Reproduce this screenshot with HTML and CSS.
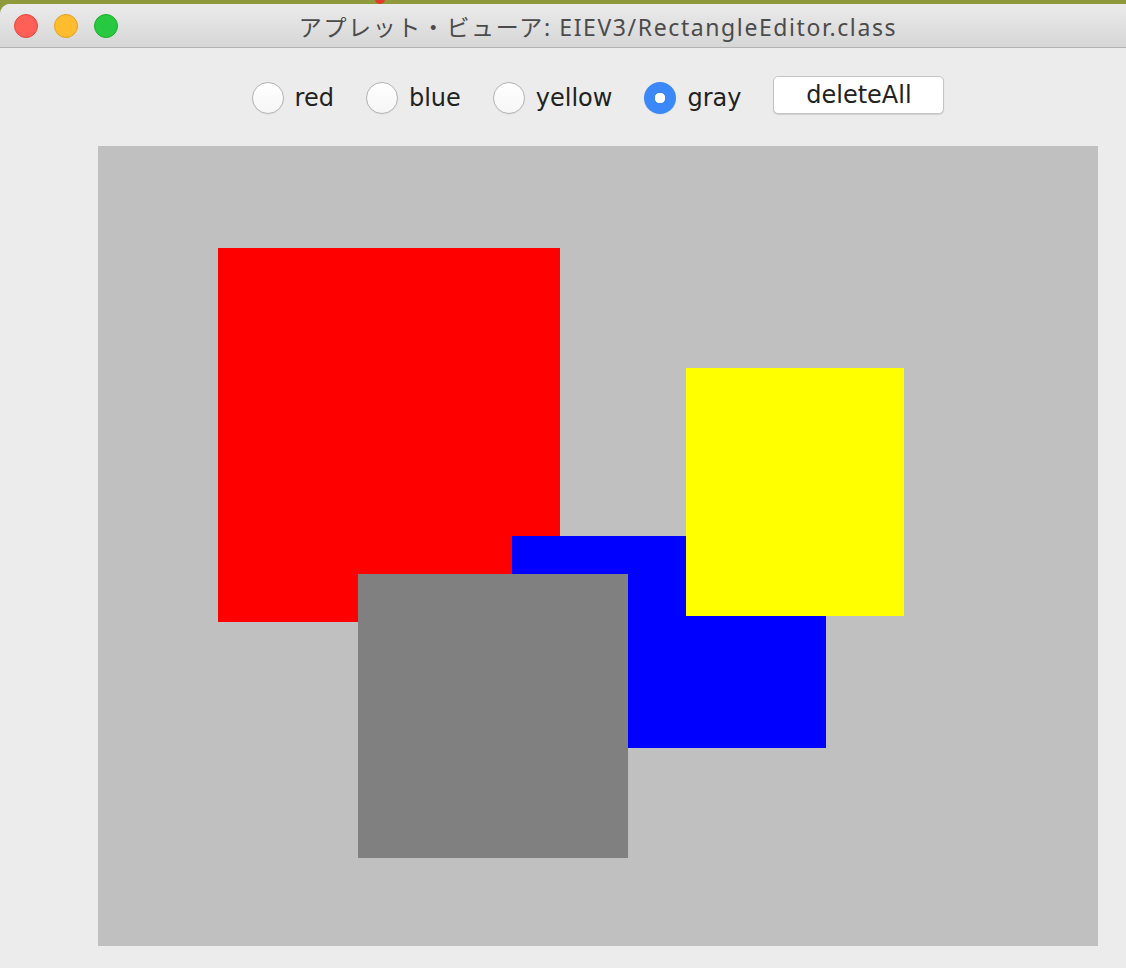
FILE: index.html
```html
<!DOCTYPE html>
<html lang="ja">
<head>
<meta charset="utf-8">
<title>アプレット・ビューア</title>
<link rel="stylesheet" href="styles.css">
</head>
<body>
<div class="desktop">
  <span class="desk-dot"></span>
  <div class="window">
    <div class="titlebar">
      <div class="lights">
        <span class="light red"></span>
        <span class="light yellow"></span>
        <span class="light green"></span>
      </div>
      <div class="title">アプレット・ビューア: EIEV3/RectangleEditor.class</div>
    </div>
    <div class="content">
      <div class="controls">
        <label class="radio"><span class="dot"></span><span class="lbl">red</span></label>
        <label class="radio"><span class="dot"></span><span class="lbl">blue</span></label>
        <label class="radio"><span class="dot"></span><span class="lbl">yellow</span></label>
        <label class="radio checked"><span class="dot"></span><span class="lbl">gray</span></label>
        <button class="btn">deleteAll</button>
      </div>
      <div class="canvas">
        <div class="rect r-red"></div>
        <div class="rect r-blue"></div>
        <div class="rect r-yellow"></div>
        <div class="rect r-gray"></div>
      </div>
    </div>
  </div>
</div>
</body>
</html>
```
FILE: styles.css
```css
html, body {
  margin: 0;
  padding: 0;
  overflow: hidden;
  width: 1126px;
  height: 968px;
  background: #8f9a3c;
}
.desktop {
  position: relative;
  padding-top: 4px;
  width: 1196px;
}
.desk-dot {
  position: absolute;
  left: 375px;
  top: -6px;
  width: 10px;
  height: 10px;
  border-radius: 50%;
  background: #e23b2e;
}
.window {
  width: 1196px;
  height: 964px;
  background: #ececec;
  border-radius: 10px 10px 0 0;
  overflow: hidden;
}
.titlebar {
  position: relative;
  height: 43px;
  border-bottom: 1px solid #b3b3b3;
  background: linear-gradient(#ebebeb, #d6d6d6);
  display: flex;
  align-items: center;
  justify-content: center;
}
.lights {
  position: absolute;
  left: 14px;
  top: 10px;
  display: flex;
  gap: 16px;
}
.light {
  width: 22px;
  height: 22px;
  border-radius: 50%;
  border: 1px solid;
}
.light.red { background: #fe5f57; border-color: #e2463f; }
.light.yellow { background: #febc2e; border-color: #dfa023; }
.light.green { background: #28c840; border-color: #1dad2b; }
.title {
  font-family: "Noto Sans", "Noto Sans CJK JP", sans-serif;
  font-size: 23px;
  color: #4b4b4b;
  letter-spacing: 1.6px;
  margin-top: 1px;
}
.content {
  padding-top: 28px;
}
.controls {
  display: flex;
  justify-content: center;
  align-items: center;
  gap: 32px;
  height: 38px;
  margin-bottom: 32px;
  font-family: "DejaVu Sans", sans-serif;
  font-size: 24px;
  color: #222;
}
.radio {
  display: flex;
  align-items: center;
  gap: 11px;
  margin-top: 5px;
}
.dot {
  box-sizing: border-box;
  width: 32px;
  height: 32px;
  border-radius: 50%;
  border: 1px solid #b4b4b4;
  background: linear-gradient(#ffffff, #f6f6f6);
  box-shadow: 0 0.5px 1px rgba(0,0,0,0.08);
}
.radio.checked .dot {
  border: none;
  background: radial-gradient(circle, #ffffff 0 5px, #3b88f8 5.5px);
}
.lbl {
  line-height: 32px;
}
.btn {
  box-sizing: border-box;
  width: 171px;
  height: 38px;
  background: #ffffff;
  border: 1px solid #c4c4c4;
  border-radius: 5px;
  box-shadow: 0 1px 1px rgba(0,0,0,0.12);
  font-family: "DejaVu Sans", sans-serif;
  font-size: 24px;
  color: #222;
  padding: 0;
}
.canvas {
  position: relative;
  width: 1000px;
  height: 800px;
  margin: 0 auto;
  background: #c0c0c0;
}
.rect { position: absolute; }
.r-red { left: 120px; top: 102px; width: 342px; height: 374px; background: #ff0000; }
.r-blue { left: 414px; top: 390px; width: 314px; height: 212px; background: #0000ff; }
.r-yellow { left: 588px; top: 222px; width: 218px; height: 248px; background: #ffff00; }
.r-gray { left: 260px; top: 428px; width: 270px; height: 284px; background: #808080; }
```
